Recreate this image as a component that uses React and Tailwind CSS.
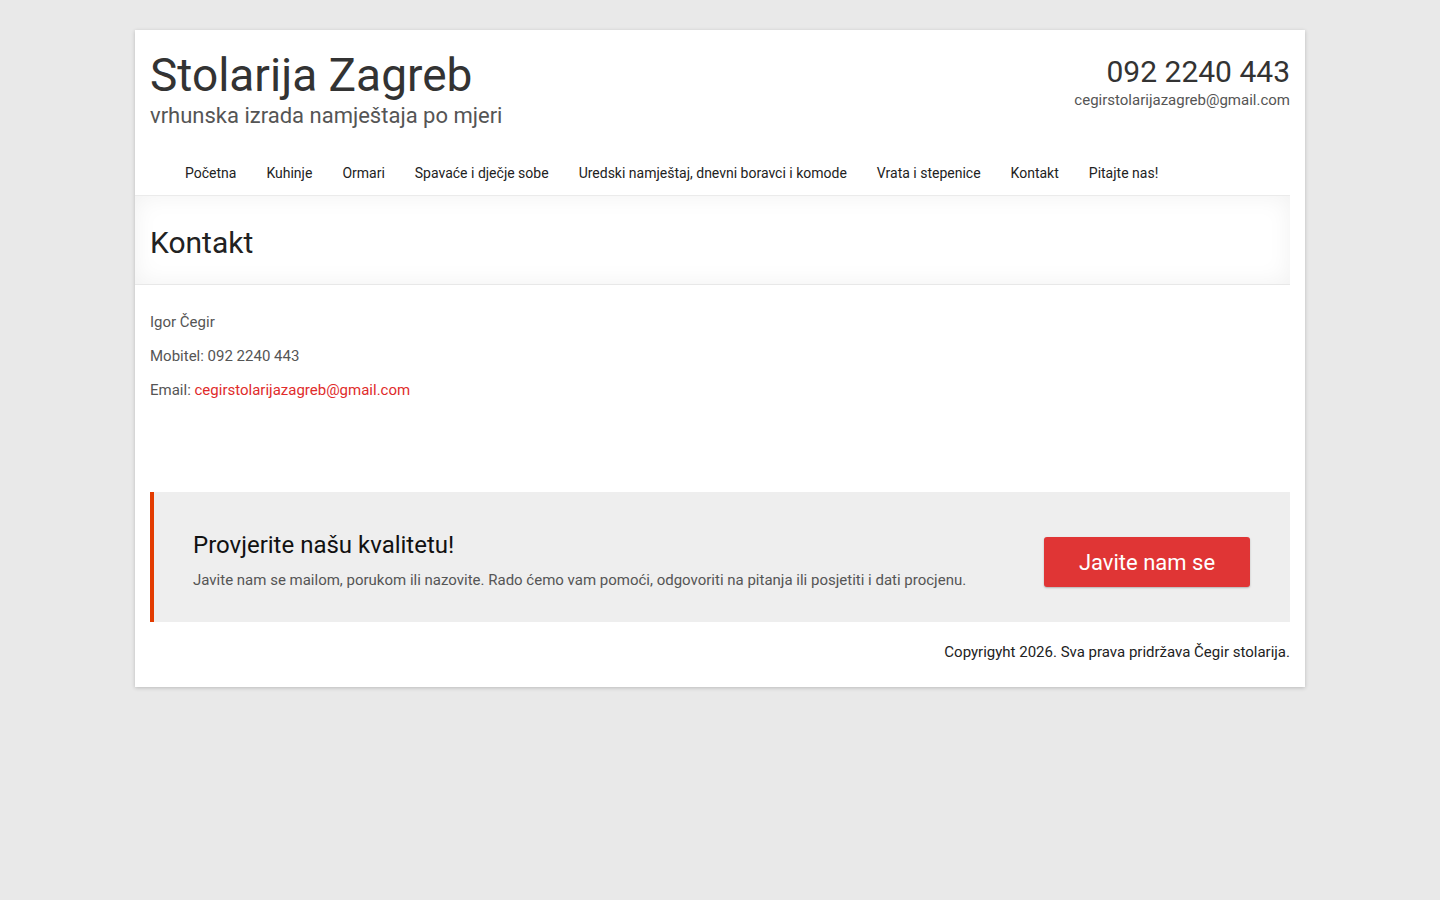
export default function App() {
  const nav = [
    "Početna",
    "Kuhinje",
    "Ormari",
    "Spavaće i dječje sobe",
    "Uredski namještaj, dnevni boravci i komode",
    "Vrata i stepenice",
    "Kontakt",
    "Pitajte nas!",
  ];

  return (
    <div className="min-h-[900px] bg-[#e9e9e9] pt-[30px] font-['Roboto',sans-serif]">
      <div className="mx-auto w-[1170px] bg-white pb-[25px] shadow-[0_1px_4px_rgba(0,0,0,0.2)]">
        {/* Header */}
        <div className="flex items-start justify-between px-[15px] pt-[19px]">
          <div>
            <h1 className="text-[46px] leading-[52px] text-[#333]">Stolarija Zagreb</h1>
            <p className="mt-[2px] text-[22px] leading-[26px] text-[#555]">
              vrhunska izrada namještaja po mjeri
            </p>
          </div>
          <div className="pt-[5px] text-right">
            <div className="text-[30px] leading-[36px] text-[#333]">092 2240 443</div>
            <div className="text-[15px] leading-[20px] text-[#555]">
              cegirstolarijazagreb@gmail.com
            </div>
          </div>
        </div>

        {/* Nav */}
        <div className="mr-[15px] mt-[20px] border-b border-[#ebebeb]">
          <ul className="ml-[35px] flex">
            {nav.map((n) => (
              <li key={n} className="px-[15px] pb-[9px] pt-[11px] text-[14px] leading-[26px] text-[#222]">
                {n}
              </li>
            ))}
          </ul>
        </div>

        {/* Page title */}
        <div className="mr-[15px] border-b border-[#e8e8e8] px-[15px] pb-[23px] pt-[29px] shadow-[inset_0_0_25px_rgba(0,0,0,0.06)]">
          <h2 className="text-[30px] leading-[36px] text-[#222]">Kontakt</h2>
        </div>

        {/* Content */}
        <div className="px-[15px] pt-[27px] text-[15px] leading-[20px] text-[#555]">
          <p>Igor Čegir</p>
          <p className="mt-[14px]">Mobitel: 092 2240 443</p>
          <p className="mt-[14px]">
            Email: <span className="text-[#e02b2b]">cegirstolarijazagreb@gmail.com</span>
          </p>
        </div>

        {/* CTA */}
        <div className="mx-[15px] mt-[92px] flex items-start justify-between border-l-[4px] border-[#e33b00] bg-[#eeeeee] pb-[32px] pl-[39px] pr-[40px] pt-[38px]">
          <div>
            <h3 className="text-[24px] leading-[30px] text-[#111]">Provjerite našu kvalitetu!</h3>
            <p className="mt-[10px] text-[15px] leading-[20px] text-[#555]">
              Javite nam se mailom, porukom ili nazovite. Rado ćemo vam pomoći, odgovoriti na pitanja ili
              posjetiti i dati procjenu.
            </p>
          </div>
          <button className="mt-[7px] h-[50px] w-[206px] shrink-0 rounded-[3px] bg-[#e03535] text-[22px] text-white shadow-[0_1px_2px_rgba(0,0,0,0.25)]">
            Javite nam se
          </button>
        </div>

        {/* Footer */}
        <div className="px-[15px] pt-[20px] text-right text-[15px] leading-[20px] text-[#222]">
          Copyrigyht 2026. Sva prava pridržava Čegir stolarija.
        </div>
      </div>
    </div>
  );
}
